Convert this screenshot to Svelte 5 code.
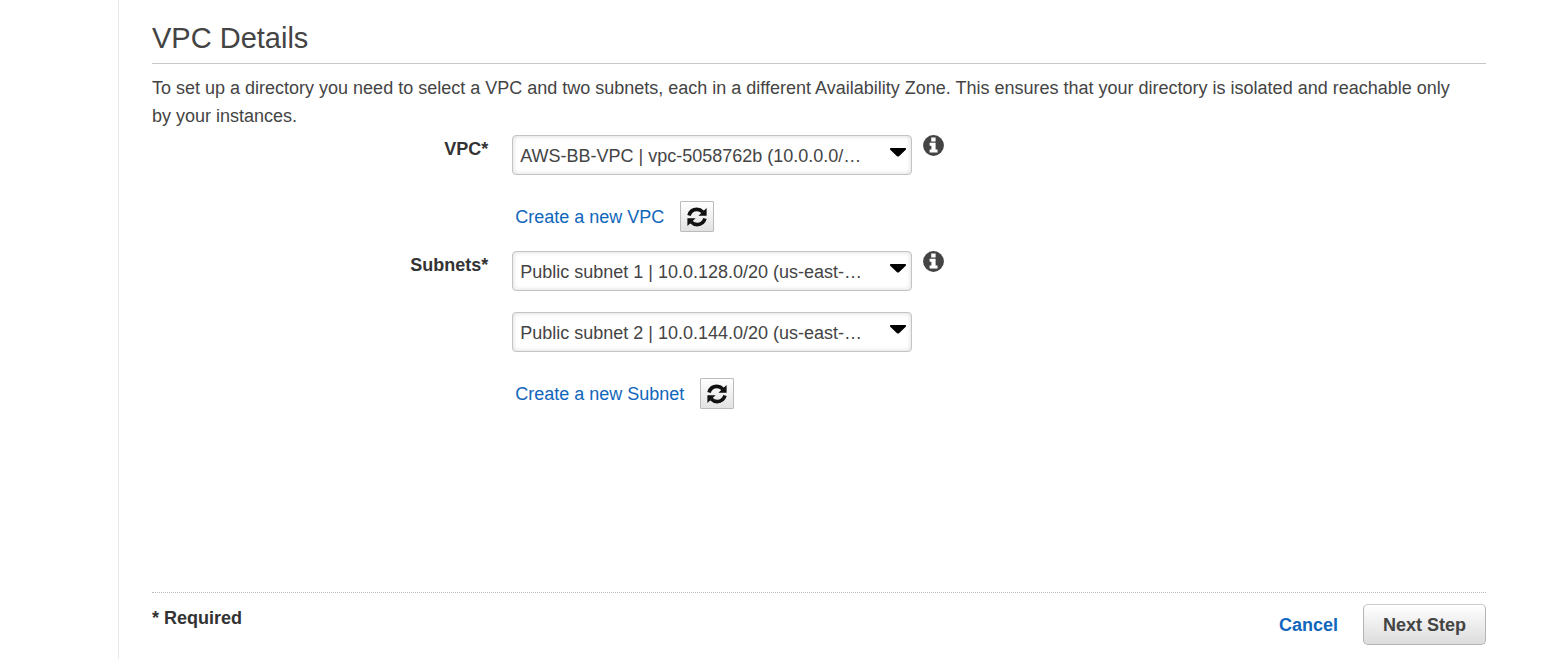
<script>
  let vpc = $state('vpc-5058762b');
  let subnetOne = $state('public-1');
  let subnetTwo = $state('public-2');
</script>

{#snippet caret()}
  <svg class="caret" viewBox="0 0 16 9" aria-hidden="true">
    <path d="M.6 0H15.4Q16 0 16 1.4L9 8.2Q8 9 7 8.2L0 1.4Q0 0 .6 0Z" />
  </svg>
{/snippet}

{#snippet info(label)}
  <button type="button" class="info" aria-label={label}>
    <svg viewBox="0 0 21 21" aria-hidden="true">
      <circle cx="10.5" cy="10.5" r="10.4" fill="#444" />
      <path
        fill="#fff"
        d="M8.2 2.6h4.4v3.8H8.2zM6.6 7.7h6v6.9h1.9v3H6.6v-3h1.8v-3.9H6.6z"
      />
    </svg>
  </button>
{/snippet}

{#snippet refresh(label)}
  <button type="button" class="refresh" aria-label={label}>
    <svg viewBox="0 0 20 20" aria-hidden="true">
      <g fill="none" stroke="#111" stroke-width="3.6">
        <path d="M2 8.4C3.2 4.4 6.2 2.4 9.8 2.4C12.2 2.4 14.2 3.4 15.8 5" />
        <path d="M18 11.6C16.8 15.6 13.8 17.6 10.2 17.6C7.8 17.6 5.8 16.6 4.2 15" />
      </g>
      <path fill="#111" d="M19.6 1V8.8H11.4zM.4 19V11.2H8.6z" />
    </svg>
  </button>
{/snippet}

<main>
  <h1>VPC Details</h1>
  <p class="intro">
    To set up a directory you need to select a VPC and two subnets, each in a different
    Availability Zone. This ensures that your directory is isolated and reachable only by your
    instances.
  </p>

  <form onsubmit={(e) => e.preventDefault()}>
    <div class="row">
      <label class="name" for="vpc">VPC*</label>
      <div class="fields">
        <div class="select">
          <select id="vpc" bind:value={vpc}>
            <option value="vpc-5058762b">AWS-BB-VPC | vpc-5058762b (10.0.0.0/…</option>
          </select>
          {@render caret()}
        </div>
        <div class="create">
          <a href="#new-vpc">Create a new VPC</a>
          {@render refresh('Refresh VPCs')}
        </div>
      </div>
      {@render info('About VPC')}
    </div>

    <div class="row">
      <label class="name" for="subnet-1">Subnets*</label>
      <div class="fields">
        <div class="select">
          <select id="subnet-1" bind:value={subnetOne}>
            <option value="public-1">Public subnet 1 | 10.0.128.0/20 (us-east-…</option>
          </select>
          {@render caret()}
        </div>
        <div class="select second">
          <select aria-label="Second subnet" bind:value={subnetTwo}>
            <option value="public-2">Public subnet 2 | 10.0.144.0/20 (us-east-…</option>
          </select>
          {@render caret()}
        </div>
        <div class="create">
          <a href="#new-subnet">Create a new Subnet</a>
          {@render refresh('Refresh subnets')}
        </div>
      </div>
      {@render info('About subnets')}
    </div>

    <footer>
      <span class="required">* Required</span>
      <a class="cancel" href="#cancel">Cancel</a>
      <button type="submit" class="next">Next Step</button>
    </footer>
  </form>
</main>

<style>
  :global(body) {
    background: #fff;
  }

  main {
    box-sizing: border-box;
    margin-left: 118px;
    padding: 16px 72px 14px 33px;
    border-left: 1px solid #eaeaea;
    color: #444;
    font: 18px/28px 'Liberation Sans', Arial, sans-serif;
  }

  h1 {
    margin: 0;
    padding-bottom: 3px;
    border-bottom: 1px solid #c8c8c8;
    font-size: 29px;
    font-weight: 400;
    line-height: 44px;
  }

  .intro {
    margin: 10px 0 5px;
    padding-right: 24px;
  }

  .row {
    display: grid;
    grid-template-columns: 27% minmax(0, 400px) auto;
    justify-content: start;
    align-items: start;
    margin-bottom: 19px;
  }

  .name {
    padding-right: 24px;
    text-align: right;
    font-weight: 700;
    color: #333;
  }

  .select {
    position: relative;
  }

  .second {
    margin-top: 21px;
  }

  select {
    display: block;
    box-sizing: border-box;
    width: 100%;
    height: 40px;
    padding: 1px 36px 0 7px;
    appearance: none;
    border: 1px solid #c4c4c4;
    border-radius: 4px;
    background: #fff;
    box-shadow: inset 0 0 5px rgba(0, 0, 0, 0.16);
    color: #444;
    font: inherit;
  }

  .caret {
    position: absolute;
    top: 13px;
    right: 6px;
    width: 16px;
    height: 9px;
    fill: #000;
    pointer-events: none;
  }

  .info {
    width: 21px;
    height: 21px;
    margin-left: 11px;
    padding: 0;
    border: 0;
    background: none;
  }

  .info svg {
    display: block;
  }

  .create {
    display: flex;
    align-items: center;
    gap: 16px;
    margin-top: 26px;
    padding-left: 3px;
  }

  a {
    color: #1166bb;
    text-decoration: none;
  }

  .refresh {
    display: grid;
    place-items: center;
    width: 34px;
    height: 31px;
    padding: 0;
    border: 1px solid #bbb;
    border-radius: 1px;
    background: linear-gradient(#fff, #e2e2e2);
  }

  .refresh svg {
    width: 20px;
    height: 20px;
  }

  footer {
    display: flex;
    align-items: center;
    margin-top: 183px;
    padding-top: 11px;
    border-top: 1px dotted #bbb;
    font-weight: 700;
  }

  .required {
    align-self: flex-start;
    margin-right: auto;
    color: #333;
  }

  .cancel {
    margin-right: 25px;
  }

  .next {
    height: 41px;
    padding: 0 19px;
    border: 1px solid #b4b4b4;
    border-top-color: #ccc;
    border-radius: 5px;
    background: linear-gradient(#fff, #dcdcdc);
    color: #444;
    font: inherit;
  }
</style>
